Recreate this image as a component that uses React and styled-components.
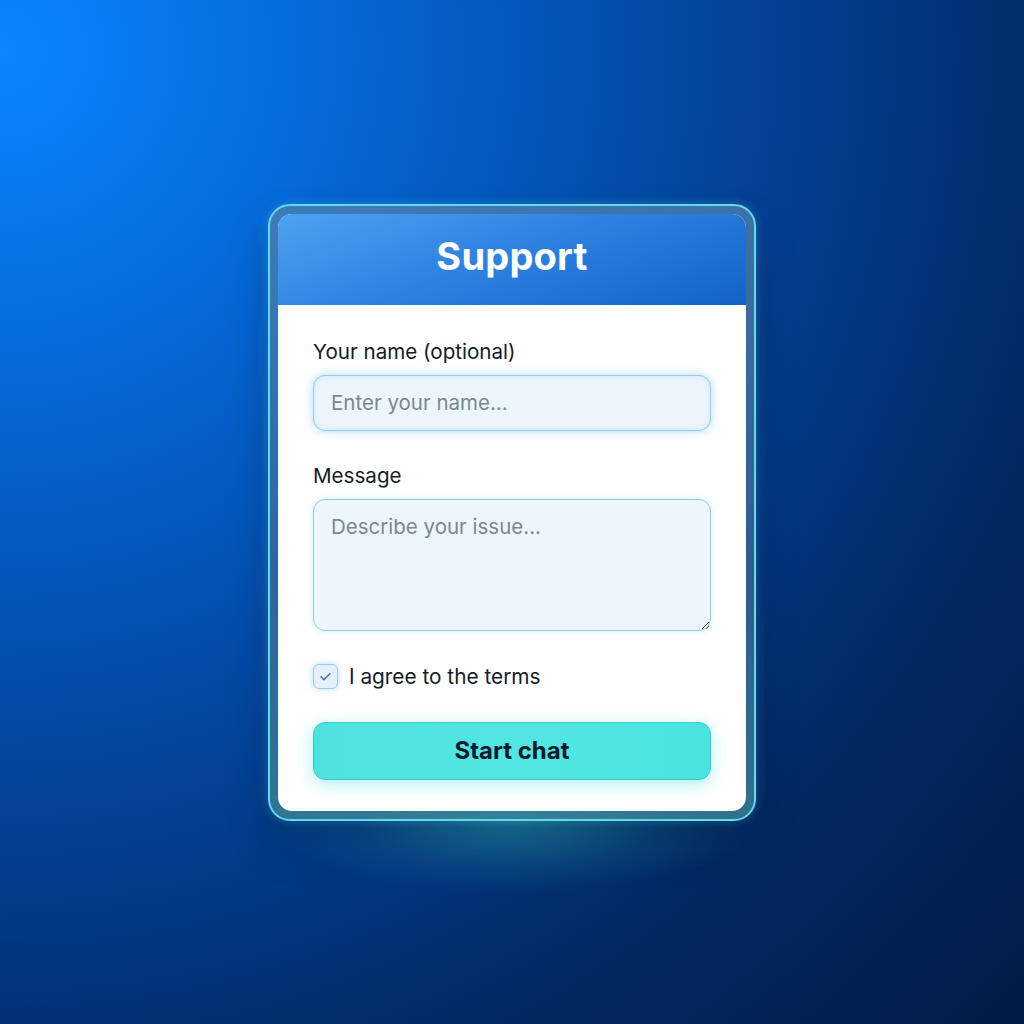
import React, { useState } from "react";
import styled, { createGlobalStyle } from "styled-components";

const GlobalStyle = createGlobalStyle`
  html, body {
    margin: 0;
    padding: 0;
    height: 100%;
  }
  body {
    font-family: Inter, "Noto Sans", "Liberation Sans", sans-serif;
    background: #03204f;
  }
`;

const Page = styled.div`
  width: 1024px;
  height: 1024px;
  display: flex;
  align-items: center;
  justify-content: center;
  background:
    radial-gradient(ellipse 250px 70px at 512px 822px, rgba(50, 200, 200, 0.5), rgba(40, 170, 190, 0.18) 60%, rgba(40, 170, 190, 0) 100%),
    radial-gradient(circle at 0% 5%, #0a86ff 0%, #0566d4 25%, #03469e 50%, #022a66 75%, #021b44 100%);
  overflow: hidden;
`;

const Frame = styled.div`
  width: 468px;
  padding: 8px;
  border: 2px solid #62d9f0;
  border-radius: 22px;
  background: linear-gradient(180deg, rgba(80, 130, 175, 0.75) 0%, rgba(60, 110, 150, 0.7) 60%, rgba(60, 130, 150, 0.8) 100%);
  box-shadow: 0 0 10px rgba(90, 220, 240, 0.3), 0 24px 40px rgba(0, 10, 40, 0.25);
`;

const Card = styled.div`
  border-radius: 14px;
  overflow: hidden;
  background: #ffffff;
`;

const Header = styled.div`
  height: 91px;
  display: flex;
  align-items: center;
  justify-content: center;
  background: linear-gradient(160deg, #4da2f2 0%, #2b80e0 50%, #1462c6 100%);
`;

const Title = styled.h1`
  margin: 0;
  color: #ffffff;
  font-size: 38px;
  font-weight: 700;
  letter-spacing: 0.2px;
  transform: translateY(-3px);
`;

const Body = styled.div`
  padding: 35px 35px 31px;
  display: flex;
  flex-direction: column;
`;

const Label = styled.label`
  display: block;
  font-size: 20.6px;
  line-height: 24px;
  color: #141c26;
  margin-bottom: 11px;
`;

const Field = styled.div`
  margin-bottom: ${(p) => p.$gap}px;
`;

const inputBase = `
  box-sizing: border-box;
  width: 100%;
  border-radius: 12px;
  border: 1.5px solid #94cbe6;
  background: #eef6fd;
  font-family: Inter, "Noto Sans", "Liberation Sans", sans-serif;
  font-size: 20.5px;
  color: #1c2733;
  outline: none;
  &::placeholder {
    color: #7b8792;
  }
`;

const TextInput = styled.input`
  ${inputBase}
  height: 56px;
  padding: 0 17px;
  box-shadow: 0 0 10px rgba(110, 195, 240, 0.55), inset 0 0 6px rgba(140, 200, 240, 0.35);
  caret-color: #3a5a78;
`;

const TextArea = styled.textarea`
  ${inputBase}
  display: block;
  height: 132px;
  padding: 14px 17px;
  resize: vertical;
  line-height: 26px;
  box-shadow: 0 0 6px rgba(140, 200, 235, 0.35);
`;

const CheckRow = styled.label`
  display: flex;
  align-items: center;
  gap: 11px;
  margin-bottom: 33px;
  font-size: 20.8px;
  color: #141c26;
  cursor: pointer;
`;

const Box = styled.span`
  box-sizing: border-box;
  width: 25px;
  height: 25px;
  border-radius: 6px;
  border: 1.5px solid #9ec9ea;
  background: #e4f0fb;
  display: flex;
  align-items: center;
  justify-content: center;
  box-shadow: 0 0 6px rgba(110, 180, 240, 0.5);
`;

const Button = styled.button`
  height: 58px;
  width: 100%;
  border-radius: 12px;
  border: 1.5px solid #3cc8d0;
  background: linear-gradient(90deg, #4fe3e0 0%, #52e6e2 50%, #4ae4e0 100%);
  font-family: Inter, "Noto Sans", "Liberation Sans", sans-serif;
  font-size: 24px;
  font-weight: 700;
  color: #0b1a2c;
  box-shadow: 0 4px 16px rgba(70, 225, 225, 0.45);
  cursor: pointer;
`;

const Check = () => (
  <svg width="15" height="15" viewBox="0 0 24 24" fill="none">
    <path d="M5 12.5l4.5 4.5L19 7.5" stroke="#3b76b8" strokeWidth="2.4" strokeLinecap="round" strokeLinejoin="round" />
  </svg>
);

export default function App() {
  const [agree, setAgree] = useState(true);

  return (
    <Page>
      <GlobalStyle />
      <Frame>
        <Card>
          <Header>
            <Title>Support</Title>
          </Header>
          <Body>
            <Field $gap={33}>
              <Label>Your name (optional)</Label>
              <TextInput placeholder="Enter your name..." autoFocus />
            </Field>
            <Field $gap={33}>
              <Label>Message</Label>
              <TextArea placeholder="Describe your issue..." />
            </Field>
            <CheckRow onClick={() => setAgree(!agree)}>
              <Box>{agree && <Check />}</Box>
              I agree to the terms
            </CheckRow>
            <Button>Start chat</Button>
          </Body>
        </Card>
      </Frame>
    </Page>
  );
}
